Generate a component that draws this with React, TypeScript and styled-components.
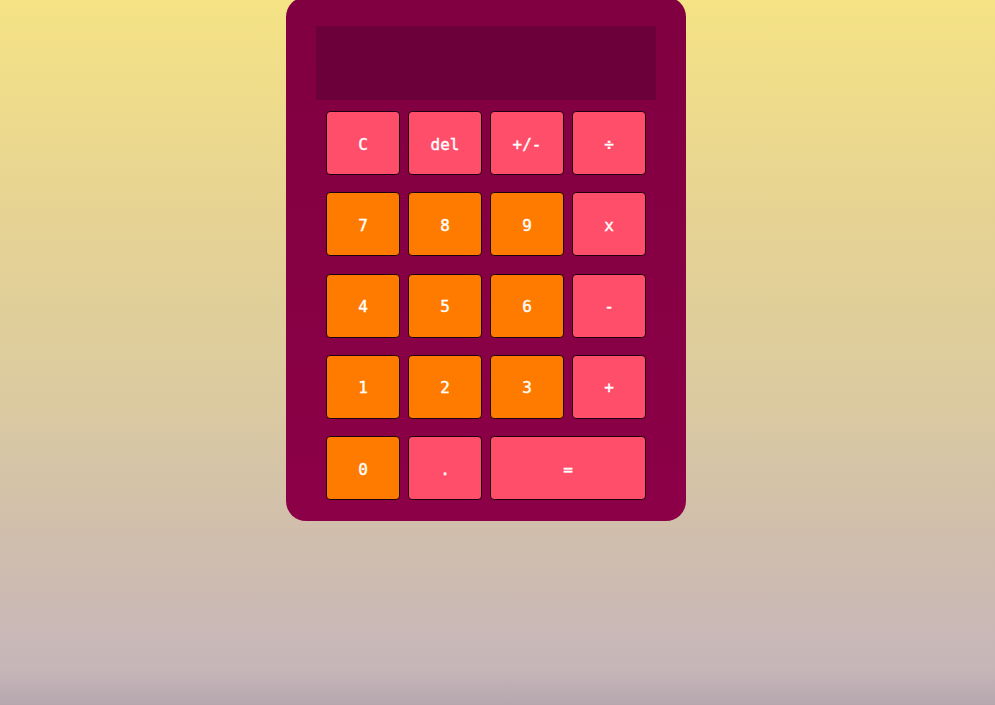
import React from "react";
import styled, { createGlobalStyle } from "styled-components";

const Global = createGlobalStyle`
  html, body {
    margin: 0;
    padding: 0;
    height: 100%;
  }
  body {
    background: linear-gradient(180deg, #f5e385 0%, #e6d393 30%, #dccb9f 55%, #cfbdae 78%, #c6b6b9 95%, #b6a7af 100%);
    background-attachment: fixed;
    min-height: 705px;
    font-family: "DejaVu Sans Mono", "Liberation Mono", monospace;
  }
`;

const Page = styled.div`
  display: flex;
  justify-content: center;
  padding-right: 23px;
`;

const Calculator = styled.div`
  width: 400px;
  box-sizing: border-box;
  margin-top: -3px;
  padding: 29px 30px 21px;
  border-radius: 20px;
  background: linear-gradient(180deg, #800041 0%, #8c0047 100%);
  display: flex;
  flex-direction: column;
  gap: 11px;
`;

const Display = styled.div`
  height: 74px;
  background: #6c003b;
`;

const Keys = styled.div`
  display: grid;
  grid-template-columns: repeat(4, 74px);
  grid-auto-rows: 64px;
  column-gap: 8px;
  row-gap: 17.3px;
  padding: 0 10px;
`;

const Key = styled.button<{ $tone: "pink" | "orange"; $span?: number }>`
  grid-column: span ${(p) => p.$span ?? 1};
  box-sizing: border-box;
  border: 1px solid #1f0011;
  border-radius: 4px;
  background: ${(p) => (p.$tone === "orange" ? "#ff7b00" : "#ff4e69")};
  color: #ffffff;
  font-family: "DejaVu Sans Mono", "Liberation Mono", monospace;
  font-size: 16px;
  font-weight: 400;
  -webkit-text-stroke: 0.4px #ffffff;
  padding: 2px 0 0;
  display: flex;
  align-items: center;
  justify-content: center;
  cursor: pointer;
`;

const keys: { label: string; tone: "pink" | "orange"; span?: number }[] = [
  { label: "C", tone: "pink" },
  { label: "del", tone: "pink" },
  { label: "+/-", tone: "pink" },
  { label: "÷", tone: "pink" },
  { label: "7", tone: "orange" },
  { label: "8", tone: "orange" },
  { label: "9", tone: "orange" },
  { label: "x", tone: "pink" },
  { label: "4", tone: "orange" },
  { label: "5", tone: "orange" },
  { label: "6", tone: "orange" },
  { label: "-", tone: "pink" },
  { label: "1", tone: "orange" },
  { label: "2", tone: "orange" },
  { label: "3", tone: "orange" },
  { label: "+", tone: "pink" },
  { label: "0", tone: "orange" },
  { label: ".", tone: "pink" },
  { label: "=", tone: "pink", span: 2 },
];

export default function App() {
  return (
    <>
      <Global />
      <Page>
        <Calculator>
          <Display />
          <Keys>
            {keys.map((k) => (
              <Key key={k.label} $tone={k.tone} $span={k.span}>
                {k.label}
              </Key>
            ))}
          </Keys>
        </Calculator>
      </Page>
    </>
  );
}
